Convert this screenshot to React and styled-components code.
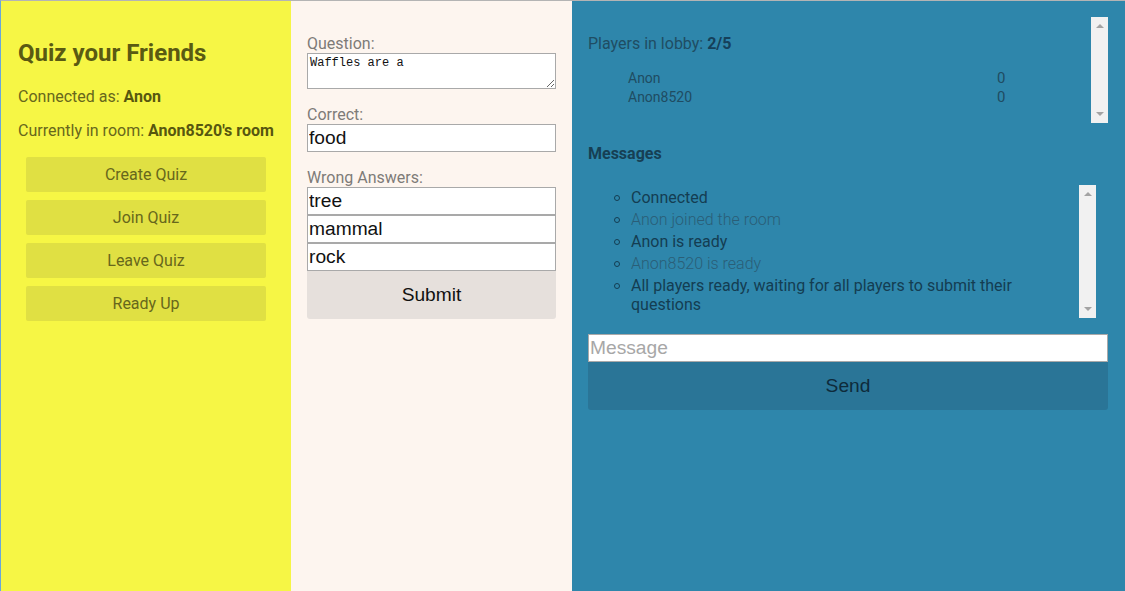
import React from "react";
import styled, { createGlobalStyle } from "styled-components";

const Global = createGlobalStyle`
  html, body { margin: 0; padding: 0; height: 100%; }
  body { font-family: Roboto, "Noto Sans", sans-serif; }
  #root { height: 100%; }
  * { box-sizing: border-box; }
`;

const Page = styled.div`
  display: flex;
  height: 591px;
  border-top: 1px solid #b4b4b4;
  border-left: 1px solid #6aa7d8;
`;

const LeftCol = styled.div`
  width: 290px;
  flex: none;
  background: #f6f645;
  padding: 38px 17px 0 17px;
  color: #67671c;
  font-size: 16px;
`;

const Title = styled.h1`
  margin: 0;
  font-size: 24px;
  font-weight: 700;
  line-height: 28px;
  color: #5a5a12;
`;

const Info = styled.p`
  margin: ${(p) => p.$mt || 16}px 0 0;
  line-height: 18px;
  b { font-weight: 700; color: #57570f; }
`;

const BtnStack = styled.div`
  display: flex;
  flex-direction: column;
  gap: 8px;
  margin: 17px 8px 0;
`;

const SideButton = styled.button`
  height: 35px;
  border: none;
  border-radius: 2px;
  background: #e0e043;
  color: #67671c;
  font-family: Roboto, sans-serif;
  font-size: 16px;
`;

const MidCol = styled.div`
  width: 281px;
  flex: none;
  background: #fdf5ef;
  padding: 34px 16px 0 16px;
  display: flex;
  flex-direction: column;
`;

const Label = styled.label`
  display: block;
  font-size: 16px;
  line-height: 18px;
  color: #7e7b78;
  margin-top: ${(p) => p.$mt || 0}px;
`;

const Area = styled.textarea`
  display: block;
  width: 249px;
  height: 36px;
  border: 1px solid #a9a9a9;
  font-family: "Liberation Mono", "DejaVu Sans Mono", monospace;
  font-size: 12px;
  padding: 2px 2px;
  resize: vertical;
  background: #fff;
  color: #111;
`;

const Field = styled.input`
  display: block;
  width: 100%;
  height: 28px;
  border: 1px solid #a9a9a9;
  font-family: "Liberation Sans", Arial, sans-serif;
  font-size: 19.2px;
  padding: 0 1px;
  color: #111;
  background: #fff;
  &::placeholder { color: #a7a7a7; }
`;

const BigButton = styled.button`
  display: block;
  width: 100%;
  height: 48px;
  border: none;
  border-radius: 0 0 3px 3px;
  background: ${(p) => p.$bg};
  color: ${(p) => p.$fg};
  font-family: "Liberation Sans", Arial, sans-serif;
  font-size: 19.2px;
`;

const RightCol = styled.div`
  flex: 1;
  background: #2e86ab;
  padding: 16px 17px 0 16px;
  color: #1b4a60;
`;

const ScrollBox = styled.div`
  display: flex;
  height: ${(p) => p.$h}px;
  margin-right: ${(p) => p.$mr || 0}px;
  margin-top: ${(p) => p.$mt || 0}px;
`;

const ScrollContent = styled.div`
  flex: 1;
  min-width: 0;
`;

const Track = styled.div`
  width: 17px;
  flex: none;
  background: #f1f1f1;
  display: flex;
  flex-direction: column;
  justify-content: space-between;
  align-items: center;
  padding: 7px 0;
`;

const Arrow = styled.div`
  width: 0;
  height: 0;
  border-left: 4px solid transparent;
  border-right: 4px solid transparent;
  ${(p) => (p.$down ? "border-top: 4px solid #a3a3a3;" : "border-bottom: 4px solid #a3a3a3;")}
`;

const Scrollbar = () => (
  <Track>
    <Arrow />
    <Arrow $down />
  </Track>
);

const LobbyTitle = styled.div`
  margin-top: 18px;
  font-size: 16px;
  line-height: 18px;
  color: #1f4d63;
  b { font-weight: 700; color: #15405a; }
`;

const PlayerTable = styled.div`
  display: grid;
  grid-template-columns: 369px auto;
  margin: 16px 0 0 40px;
  font-size: 14px;
  line-height: 19px;
  color: #1f4c62;
`;

const Score = styled.span`
  font-size: 15px;
`;

const SectionHead = styled.div`
  margin-top: 22px;
  font-size: 16px;
  font-weight: 700;
  line-height: 18px;
  color: #163f54;
`;

const MsgList = styled.ul`
  list-style: none;
  margin: 0;
  padding: 3px 14px 0 43px;
  font-size: 16px;
  line-height: 19px;
`;

const Msg = styled.li`
  position: relative;
  margin-bottom: 3px;
  color: ${(p) => (p.$light ? "#2a5e77" : "#143d52")};
  font-weight: ${(p) => (p.$light ? 300 : 400)};
  &::before {
    content: "";
    position: absolute;
    left: -17px;
    top: 7px;
    width: 4px;
    height: 4px;
    border: 1px solid #143d52;
    border-radius: 50%;
  }
`;

const Composer = styled.div`
  margin-top: 16px;
`;

export default function App() {
  return (
    <>
      <Global />
      <Page>
        <LeftCol>
          <Title>Quiz your Friends</Title>
          <Info $mt={21}>
            Connected as: <b>Anon</b>
          </Info>
          <Info>
            Currently in room: <b>Anon8520's room</b>
          </Info>
          <BtnStack>
            <SideButton>Create Quiz</SideButton>
            <SideButton>Join Quiz</SideButton>
            <SideButton>Leave Quiz</SideButton>
            <SideButton>Ready Up</SideButton>
          </BtnStack>
        </LeftCol>
        <MidCol>
          <Label>Question:</Label>
          <Area defaultValue="Waffles are a" />
          <Label $mt={17}>Correct:</Label>
          <Field defaultValue="food" />
          <Label $mt={17}>Wrong Answers:</Label>
          <Field defaultValue="tree" />
          <Field defaultValue="mammal" />
          <Field defaultValue="rock" />
          <BigButton $bg="#e6e0dc" $fg="#111">Submit</BigButton>
        </MidCol>
        <RightCol>
          <ScrollBox $h={106}>
            <ScrollContent>
              <LobbyTitle>
                Players in lobby: <b>2/5</b>
              </LobbyTitle>
              <PlayerTable>
                <span>Anon</span>
                <Score>0</Score>
                <span>Anon8520</span>
                <Score>0</Score>
              </PlayerTable>
            </ScrollContent>
            <Scrollbar />
          </ScrollBox>
          <SectionHead>Messages</SectionHead>
          <ScrollBox $h={133} $mr={12} $mt={22}>
            <ScrollContent>
              <MsgList>
                <Msg>Connected</Msg>
                <Msg $light>Anon joined the room</Msg>
                <Msg>Anon is ready</Msg>
                <Msg $light>Anon8520 is ready</Msg>
                <Msg>All players ready, waiting for all players to submit their questions</Msg>
              </MsgList>
            </ScrollContent>
            <Scrollbar />
          </ScrollBox>
          <Composer>
            <Field placeholder="Message" />
            <BigButton $bg="#2a7597" $fg="#0e2b3b">Send</BigButton>
          </Composer>
        </RightCol>
      </Page>
    </>
  );
}
